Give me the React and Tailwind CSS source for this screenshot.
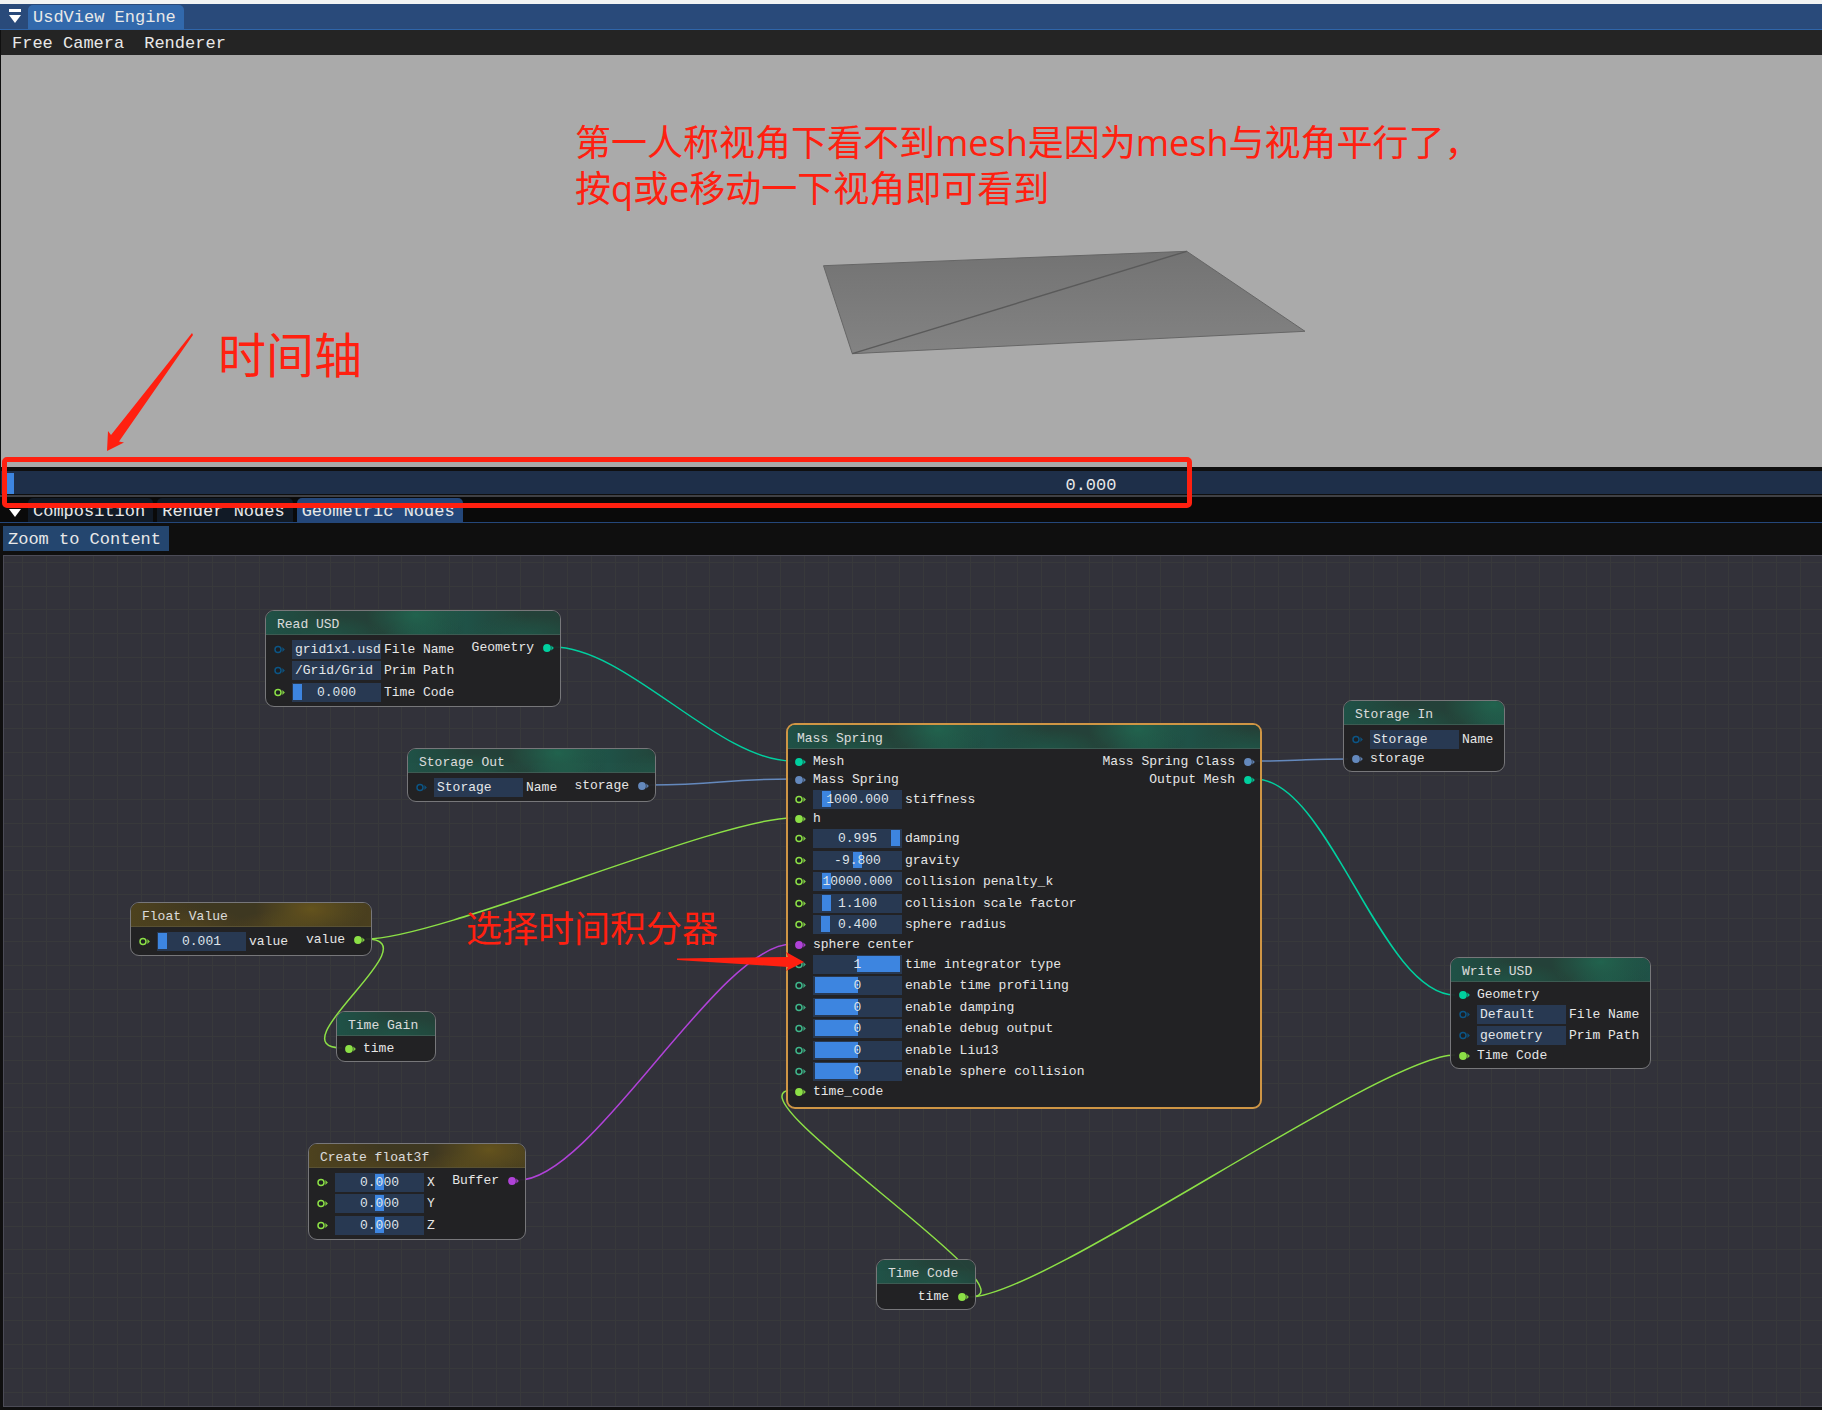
import React from "react";

const COLORS = {
  geometry: "#00d09f",
  storage: "#6489bd",
  float: "#8ce046",
  vector: "#b042d8",
  string: "#0c5585",
  integer: "#3fb68a",
};

const LINK_STRENGTH = 74;

const LINKS = [
  { from: [553, 647], to: [792, 761], type: "geometry" },
  { from: [649, 785], to: [792, 779], type: "storage" },
  { from: [366, 939], to: [792, 818], type: "float" },
  { from: [366, 939], to: [342, 1048], type: "float" },
  { from: [519, 1180], to: [792, 944], type: "vector" },
  { from: [970, 1297], to: [793, 1090], type: "float" },
  { from: [970, 1297], to: [1455, 1055], type: "float" },
  { from: [1255, 761], to: [1348, 759], type: "storage" },
  { from: [1255, 779], to: [1455, 995], type: "geometry" },
];

const NODES = [
  {
    title: "Read USD",
    place: "left-[261px] top-[54px] w-[296px]",
    tone: "green",
    inputs: [
      { label: "File Name", type: "string", text: "grid1x1.usd" },
      { label: "Prim Path", type: "string", text: "/Grid/Grid" },
      { label: "Time Code", type: "float", value: "0.000", pos: 0 },
    ],
    outputs: [{ label: "Geometry", type: "geometry" }],
  },
  {
    title: "Storage Out",
    place: "left-[403px] top-[192px] w-[249px]",
    tone: "green",
    inputs: [{ label: "Name", type: "string", text: "Storage" }],
    outputs: [{ label: "storage", type: "storage" }],
  },
  {
    title: "Mass Spring",
    place: "left-[782px] top-[167px] w-[476px]",
    tone: "green",
    selected: true,
    inputs: [
      { label: "Mesh", type: "geometry" },
      { label: "Mass Spring", type: "storage" },
      { label: "stiffness", type: "float", value: "1000.000", pos: 8 },
      { label: "h", type: "float" },
      { label: "damping", type: "float", value: "0.995", pos: 77 },
      { label: "gravity", type: "float", value: "-9.800", pos: 39 },
      { label: "collision penalty_k", type: "float", value: "10000.000", pos: 8 },
      { label: "collision scale factor", type: "float", value: "1.100", pos: 8 },
      { label: "sphere radius", type: "float", value: "0.400", pos: 7 },
      { label: "sphere center", type: "vector" },
      { label: "time integrator type", type: "integer", value: "1", pos: 1, toggle: true },
      { label: "enable time profiling", type: "integer", value: "0", pos: 0, toggle: true },
      { label: "enable damping", type: "integer", value: "0", pos: 0, toggle: true },
      { label: "enable debug output", type: "integer", value: "0", pos: 0, toggle: true },
      { label: "enable Liu13", type: "integer", value: "0", pos: 0, toggle: true },
      { label: "enable sphere collision", type: "integer", value: "0", pos: 0, toggle: true },
      { label: "time_code", type: "float" },
    ],
    outputs: [
      { label: "Mass Spring Class", type: "storage" },
      { label: "Output Mesh", type: "geometry" },
    ],
  },
  {
    title: "Storage In",
    place: "left-[1339px] top-[144px] w-[162px]",
    tone: "green",
    inputs: [
      { label: "Name", type: "string", text: "Storage" },
      { label: "storage", type: "storage" },
    ],
    outputs: [],
  },
  {
    title: "Write USD",
    place: "left-[1446px] top-[401px] w-[201px]",
    tone: "green",
    inputs: [
      { label: "Geometry", type: "geometry" },
      { label: "File Name", type: "string", text: "Default" },
      { label: "Prim Path", type: "string", text: "geometry" },
      { label: "Time Code", type: "float" },
    ],
    outputs: [],
  },
  {
    title: "Float Value",
    place: "left-[126px] top-[346px] w-[242px]",
    tone: "gold",
    inputs: [{ label: "value", type: "float", value: "0.001", pos: 0 }],
    outputs: [{ label: "value", type: "float" }],
  },
  {
    title: "Time Gain",
    place: "left-[332px] top-[455px] w-[100px]",
    tone: "green",
    inputs: [{ label: "time", type: "float" }],
    outputs: [],
  },
  {
    title: "Create float3f",
    place: "left-[304px] top-[587px] w-[218px]",
    tone: "gold",
    inputs: [
      { label: "X", type: "float", value: "0.000", pos: 39 },
      { label: "Y", type: "float", value: "0.000", pos: 39 },
      { label: "Z", type: "float", value: "0.000", pos: 39 },
    ],
    outputs: [{ label: "Buffer", type: "vector" }],
  },
  {
    title: "Time Code",
    place: "left-[872px] top-[703px] w-[100px]",
    tone: "green",
    inputs: [],
    outputs: [{ label: "time", type: "float" }],
  },
];

function linkPath([x0, y0], [x1, y1]) {
  const half = Math.hypot(x1 - x0, y1 - y0) / 2;
  const s =
    half < LINK_STRENGTH
      ? LINK_STRENGTH * Math.sin((Math.PI / 2) * (half / LINK_STRENGTH))
      : LINK_STRENGTH;
  return `M${x0} ${y0}C${x0 + s} ${y0} ${x1 - s} ${y1} ${x1} ${y1}`;
}

function Pin({ type, filled }) {
  const c = COLORS[type];
  return (
    <svg className="block h-[10px] w-[13px] shrink-0" viewBox="0 0 13 10" aria-hidden="true">
      {filled ? (
        <circle cx="5" cy="5" r="3.9" fill={c} />
      ) : (
        <circle cx="5" cy="4.5" r="3" fill="#1d1f22" stroke={c} strokeWidth="1.5" />
      )}
      <path
        d={filled ? "M9.4 2.4L11.9 5L9.4 7.6Z" : "M9.4 2L11.9 4.5L9.4 7Z"}
        fill={c}
        opacity="0.9"
      />
    </svg>
  );
}

function TextField({ id, text }) {
  return (
    <input
      id={id}
      type="text"
      defaultValue={text}
      className="block h-[19px] w-[89px] bg-[#283952] pl-[3px] text-[13px] leading-[19px] text-[#e4e7ea] outline-none"
    />
  );
}

function SliderField({ id, value, pos, toggle }) {
  return (
    <span className="relative block h-[19px] w-[89px] bg-[#283952] px-px">
      <input
        id={id}
        type="range"
        min="0"
        max={toggle ? 1 : 78}
        defaultValue={pos}
        className={
          toggle
            ? "block h-[18px] w-full appearance-none bg-transparent px-px [&::-webkit-slider-thumb]:h-[16px] [&::-webkit-slider-thumb]:w-[43px] [&::-webkit-slider-thumb]:appearance-none [&::-webkit-slider-thumb]:bg-[#3d85e0]"
            : "block h-[18px] w-full appearance-none bg-transparent [&::-webkit-slider-thumb]:h-[16px] [&::-webkit-slider-thumb]:w-[9px] [&::-webkit-slider-thumb]:appearance-none [&::-webkit-slider-thumb]:bg-[#3d85e0]"
        }
      />
      <output
        htmlFor={id}
        className="pointer-events-none absolute inset-0 text-center leading-[20px] text-[#dfe4ea]"
      >
        {value}
      </output>
    </span>
  );
}

function InputRow({ nodeTitle, row, tall }) {
  const id = `${nodeTitle}-${row.label}`.replace(/\s+/g, "-");
  const isText = row.text !== undefined;
  const isSlider = row.value !== undefined;
  if (!isText && !isSlider) {
    return (
      <li className="flex h-[18px] items-center gap-[6px]">
        <Pin type={row.type} filled />
        <span>{row.label}</span>
      </li>
    );
  }
  return (
    <li className={tall ? "h-[22px] pt-px" : "h-[21px] pt-px"}>
      <div className="flex h-[19px] items-center">
        <Pin type={row.type} />
        <div className="ml-[6px]">
          {isText ? <TextField id={id} text={row.text} /> : <SliderField id={id} {...row} />}
        </div>
        <label htmlFor={id} className="ml-[3px] leading-[20px]">
          {row.label}
        </label>
      </div>
    </li>
  );
}

const TONES = {
  green:
    "border-[#3f5f56] bg-[#25443b] bg-[size:200px_25px] bg-[radial-gradient(60px_22px_at_60px_26px,#20594a_0%,transparent_100%),radial-gradient(50px_30px_at_150px_4px,#226852_0%,transparent_100%),radial-gradient(40px_16px_at_158px_24px,#20594a_0%,transparent_100%),linear-gradient(90deg,#20564a_0%,#25443b_30%,#25443b_70%,#20564a_100%)]",
  gold:
    "border-[#5d5535] bg-[#413a22] bg-[size:240px_25px] bg-[radial-gradient(60px_22px_at_60px_26px,#53461f_0%,transparent_100%),radial-gradient(56px_30px_at_180px_6px,#69571e_0%,transparent_100%),radial-gradient(50px_16px_at_150px_24px,#55481f_0%,transparent_100%),linear-gradient(90deg,#51451f_0%,#413a22_30%,#413a22_70%,#4d421f_100%)]",
};

function Node({ node }) {
  let fields = 0;
  const rows = node.inputs.map((row) => {
    const hasField = row.text !== undefined || row.value !== undefined;
    const tall = hasField && fields++ % 2 === 1;
    return <InputRow key={row.label} nodeTitle={node.title} row={row} tall={tall} />;
  });
  const frame = node.selected
    ? "border-2 border-[#cf9645] pb-[6px]"
    : "border border-[#77777a] pb-[3px]";
  const inset = node.selected ? "pl-[6px] pr-1" : "pl-[7px] pr-[5px]";
  return (
    <section
      className={`absolute overflow-hidden rounded-[9px] bg-[#212123]/94 text-[13px] leading-[18px] text-[#e6e6e6] ${frame} ${node.place}`}
    >
      <h2
        className={`h-[24px] border-b leading-[27px] opacity-95 ${node.selected ? "pl-[9px]" : "pl-[11px]"} ${TONES[node.tone]}`}
      >
        {node.title}
      </h2>
      <div className={`flex justify-between pt-1 ${inset}`}>
        <ul>{rows}</ul>
        <ul>
          {node.outputs.map((o) => (
            <li key={o.label} className="flex h-[18px] items-center justify-end gap-[8px]">
              <span>{o.label}</span>
              <Pin type={o.type} filled />
            </li>
          ))}
        </ul>
      </div>
    </section>
  );
}

const GRID = [0, 24, 47, 71, 95, 119, 142, 166, 190, 213];

function Graph() {
  return (
    <svg className="absolute inset-0 h-full w-full" aria-hidden="true">
      <defs>
        <pattern id="grid" x="18" y="6" width="237" height="237" patternUnits="userSpaceOnUse">
          {GRID.map((p) => (
            <g key={p} fill="#38393b">
              <rect x={p} y="0" width="1" height="237" />
              <rect x="0" y={p} width="237" height="1" />
            </g>
          ))}
        </pattern>
      </defs>
      <rect width="100%" height="100%" fill="url(#grid)" />
      <g transform="translate(-4 -556)" fill="none" strokeWidth="1.5">
        {LINKS.map((l, i) => (
          <path key={i} d={linkPath(l.from, l.to)} stroke={COLORS[l.type]} />
        ))}
      </g>
    </svg>
  );
}

function Viewport() {
  return (
    <div className="ml-px h-[412px] bg-[#aaaaaa]">
      <svg className="block h-full w-full" aria-hidden="true">
        <defs>
          <linearGradient id="mesh" x1="0" y1="0" x2="0" y2="1">
            <stop offset="0" stopColor="#737373" />
            <stop offset="1" stopColor="#838383" />
          </linearGradient>
        </defs>
        <g transform="translate(-1 -55)" stroke="#666666">
          <path d="M823.5 265.7L1186.7 251.3L1305 331.3L852.3 353.7Z" fill="url(#mesh)" />
          <path d="M1186.7 251.3L852.3 353.7" stroke="#5a5a5a" strokeWidth="1.4" />
        </g>
      </svg>
    </div>
  );
}

const TABS = [
  { label: "Composition" },
  { label: "Render Nodes" },
  { label: "Geometric Nodes", active: true },
];

function Annotations() {
  return (
    <div className="pointer-events-none absolute inset-0 font-['Open_Sans','Noto_Sans_CJK_SC',sans-serif] text-[#ff2010]">
      <p className="absolute left-[575px] top-[120px] whitespace-nowrap text-[36px] leading-[46px]">
        第一人称视角下看不到mesh是因为mesh与视角平行了，
        <br />
        按q或e移动一下视角即可看到
      </p>
      <p className="absolute left-[218px] top-[325px] whitespace-nowrap text-[48px] leading-[60px]">
        时间轴
      </p>
      <p className="absolute left-[466px] top-[906px] whitespace-nowrap text-[36px] leading-[46px]">
        选择时间积分器
      </p>
      <div className="absolute left-[2px] top-[457px] h-[51px] w-[1190px] rounded-[5px] border-[5px] border-[#ff2010]" />
      <svg className="absolute inset-0 h-full w-full" fill="#ff2010" aria-hidden="true">
        <path d="M192 333L193 335L119 441.5L124 442.5L107 451L108 431L111 435Z" />
        <path d="M677 958.5V960L788 967L786 971L804 962L786 952L788 957Z" />
      </svg>
    </div>
  );
}

export default function App() {
  return (
    <div className="relative flex min-h-screen flex-col overflow-hidden bg-[#0f0f0f] font-['Liberation_Mono',monospace] text-[17px] leading-[24px] text-[#e8e8e8]">
      <div className="h-1 bg-[#f1f3f3]" />
      <header className="flex h-[26px] items-end border-b border-[#2f65a9] bg-[#294a7a]">
        <button type="button" aria-label="Window menu" className="ml-[9px] h-[24px]">
          <svg className="block h-[24px] w-[12px]" viewBox="0 0 12 24" fill="#ffffff">
            <rect y="4" width="12" height="3" />
            <path d="M0 10H12L6 18Z" />
          </svg>
        </button>
        <button
          type="button"
          className="ml-[7px] h-[24px] rounded-t-[5px] bg-[#3269ac] pl-[5px] pr-[8px] leading-[26px] whitespace-nowrap"
        >
          UsdView Engine
        </button>
      </header>
      <nav className="ml-px flex h-[25px] gap-[20px] bg-[#242424] pl-[11px] leading-[27px]">
        <button type="button">Free Camera</button>
        <button type="button">Renderer</button>
      </nav>
      <Viewport />
      <div className="mt-1 h-[23px] overflow-hidden pl-px">
        <div className="relative h-[23px] w-[119.6%] bg-[#1e2f49]">
          <input
            type="range"
            aria-label="Timeline"
            min="0"
            max="100"
            defaultValue="0"
            className="block h-[23px] w-full appearance-none bg-transparent pl-[4px] pt-[2px] [&::-webkit-slider-thumb]:h-[21px] [&::-webkit-slider-thumb]:w-[9px] [&::-webkit-slider-thumb]:appearance-none [&::-webkit-slider-thumb]:bg-[#3d85e0]"
          />
          <output className="pointer-events-none absolute inset-0 pl-[2px] text-center leading-[29px]">
            0.000
          </output>
        </div>
      </div>
      <div className="mt-px h-[2px] bg-[#404145]" />
      <div className="flex h-[26px] items-end border-b border-[#24477a] bg-[#0a0a0a]">
        <button type="button" aria-label="Panel menu" className="ml-[9px] h-[24px]">
          <svg className="block h-[24px] w-[12px]" viewBox="0 0 12 24" fill="#ffffff">
            <path d="M0 11H12L6 19Z" />
          </svg>
        </button>
        <div role="tablist" className="ml-[7px] flex gap-1">
          {TABS.map((t) => (
            <button
              key={t.label}
              type="button"
              role="tab"
              aria-selected={Boolean(t.active)}
              className={
                t.active
                  ? "h-[24px] rounded-t-[5px] bg-[#24477a] pl-[5px] pr-[8px] leading-[27px] whitespace-nowrap"
                  : "h-[24px] rounded-t-[5px] bg-[#111a26] pl-[5px] pr-[8px] leading-[27px] whitespace-nowrap"
              }
            >
              {t.label}
            </button>
          ))}
        </div>
      </div>
      <div className="pl-[3px] pt-[3px]">
        <button type="button" className="block h-[25px] bg-[#24466f] pl-[5px] pr-[8px] leading-[27px]">
          Zoom to Content
        </button>
      </div>
      <main className="relative mb-[3px] ml-[3px] mt-1 min-h-[760px] flex-1 overflow-hidden border-y border-l border-[#4b4b56] bg-[#32323a]">
        <Graph />
        {NODES.map((n) => (
          <Node key={n.title} node={n} />
        ))}
      </main>
      <Annotations />
    </div>
  );
}
